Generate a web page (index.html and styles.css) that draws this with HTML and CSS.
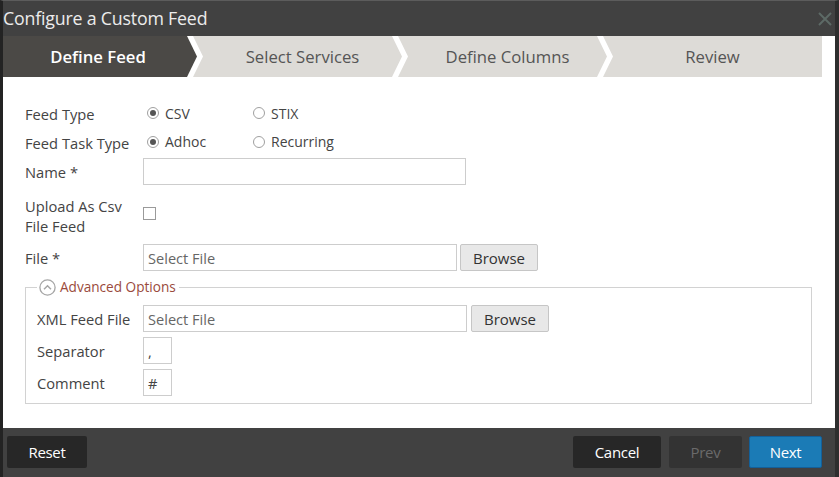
FILE: index.html
```html
<!DOCTYPE html>
<html>
<head>
<meta charset="utf-8">
<link rel="stylesheet" href="styles.css">
</head>
<body>
<div class="dialog">
  <div class="titlebar">
    <span class="title">Configure a Custom Feed</span>
    <svg class="close" width="14" height="14" viewBox="0 0 14 14"><path d="M1 1L13 13M13 1L1 13" stroke="#5d6a66" stroke-width="2"/></svg>
  </div>
  <div class="panel">
    <div class="steps">
      <div class="step first active">Define Feed</div>
      <div class="step">Select Services</div>
      <div class="step">Define Columns</div>
      <div class="step last">Review</div>
    </div>
    <div class="form">
      <div class="row r1">
        <div class="lbl">Feed Type</div>
        <div class="opt"><span class="radio on"></span>CSV</div>
        <div class="opt"><span class="radio"></span>STIX</div>
      </div>
      <div class="row r2">
        <div class="lbl">Feed Task Type</div>
        <div class="opt"><span class="radio on"></span>Adhoc</div>
        <div class="opt"><span class="radio"></span>Recurring</div>
      </div>
      <div class="row r3">
        <div class="lbl">Name *</div>
        <div class="input name"></div>
      </div>
      <div class="row r4">
        <div class="lbl two">Upload As Csv<br>File Feed</div>
        <span class="check"></span>
      </div>
      <div class="row r5">
        <div class="lbl">File *</div>
        <div class="input file ph">Select File</div>
        <div class="btn-browse">Browse</div>
      </div>
      <fieldset class="adv">
        <legend><svg class="chev" width="17" height="17" viewBox="0 0 17 17"><circle cx="8.5" cy="8.5" r="7.6" fill="none" stroke="#a6a6a6" stroke-width="1.3"/><path d="M5 10.2L8.5 6.7L12 10.2" fill="none" stroke="#a6a6a6" stroke-width="1.5"/></svg>Advanced Options</legend>
        <div class="row a1">
          <div class="lbl2">XML Feed File</div>
          <div class="input xml ph">Select File</div>
          <div class="btn-browse b2">Browse</div>
        </div>
        <div class="row a2">
          <div class="lbl2">Separator</div>
          <div class="input small">,</div>
        </div>
        <div class="row a2">
          <div class="lbl2">Comment</div>
          <div class="input small">#</div>
        </div>
      </fieldset>
    </div>
  </div>
  <div class="footer">
    <div class="fbtn reset">Reset</div>
    <div class="spacer"></div>
    <div class="fbtn cancel">Cancel</div>
    <div class="fbtn prev">Prev</div>
    <div class="fbtn next">Next</div>
  </div>
</div>
</body>
</html>
```
FILE: styles.css
```css
* { box-sizing: border-box; }
html, body { margin: 0; padding: 0; background: #414141; }
body { font-family: "Open Sans", "DejaVu Sans", sans-serif; }
.dialog {
  width: 839px; height: 477px;
  background: #414141;
  border-left: 3px solid #232323;
  border-right: 4px solid #2e2e2e;
  border-top: 1px solid #5c5c5c;
  display: flex; flex-direction: column;
}
.titlebar {
  height: 35px; display: flex; align-items: center; justify-content: space-between;
  padding: 0 3px 2px 0;
}
.title { color: #ececec; font-size: 17.8px; letter-spacing: -0.2px; }
.close { margin-top: 2px; }
.panel { background: #fff; height: 392px; }
.steps { display: flex; height: 41px; margin-right: 13px; }
.step {
  height: 41px; display: flex; align-items: center; justify-content: center;
  background: #dddbd7; color: #555; font-size: 16.7px;
  width: 209px; margin-left: -4px; padding: 0 10px 0 20px;
  clip-path: polygon(0 0, calc(100% - 10px) 0, 100% 50%, calc(100% - 10px) 100%, 0 100%, 10px 50%);
}
.step.first { width: 194px; margin-left: 0; padding: 0 10px 0 6px;
  clip-path: polygon(0 0, calc(100% - 10px) 0, 100% 50%, calc(100% - 10px) 100%, 0 100%); }
.step.last { flex: 1; width: auto; padding: 0 0 0 0;
  clip-path: polygon(0 0, 100% 0, 100% 100%, 0 100%, 10px 50%); }
.step.active { background: #4b4946; color: #fff; font-weight: 600; }
.form { padding: 23px 23px 0 22px; color: #444; font-size: 14.7px; }
.row { display: flex; align-items: center; }
.lbl { width: 118px; flex: none; }
.lbl2 { width: 106px; flex: none; }
.r1 { height: 28px; }
.r2 { height: 29px; }
.r3 { height: 27px; margin-top: 1px; }
.r4 { height: 40px; margin-top: 11px; align-items: flex-start; }
.r5 { height: 27px; margin-top: 8px; }
.two { line-height: 20px; }
.opt { width: 106px; display: flex; align-items: center; margin-top: -2px; font-size: 14px; }
.radio {
  width: 12px; height: 12px; border-radius: 50%; border: 1px solid #a0a0a0;
  margin: 0 6px 0 4px; position: relative; background: #fff; flex: none;
}
.radio.on::after {
  content: ""; position: absolute; left: 2px; top: 2px; width: 6px; height: 6px;
  border-radius: 50%; background: #555;
}
.check { width: 13px; height: 13px; border: 1px solid #9a9a9a; margin-top: 11px; background: #fff; }
.input {
  height: 27px; border: 1px solid #cdcdcd; background: #fff; color: #444;
  display: flex; align-items: center; padding-left: 4px; font-size: 14.6px;
}
.input.ph { color: #666; }
.name { width: 323px; }
.file { width: 314px; }
.xml { width: 324px; }
.small { width: 29px; }
.btn-browse {
  height: 27px; width: 78px; margin-left: 3px;
  background: #e8e8e8; border: 1px solid #c6c6c6; border-radius: 2px;
  display: flex; align-items: center; justify-content: center; color: #333; font-size: 15px;
}
.btn-browse.b2 { margin-left: 4px; }
.adv {
  margin: 6px 0 0 0; padding: 0 11px 7px 11px;
  border: 1px solid #d2d2d2; min-width: 0;
}
.adv legend {
  padding: 0 3px 0 2px; height: 20px; line-height: 20px; color: #9a4a3c;
  display: flex; align-items: center; font-size: 13.6px;
}
.chev { margin-right: 4px; }
.a1 { margin-top: 8px; height: 27px; }
.a2 { margin-top: 5px; height: 27px; }
.footer {
  flex: 1; display: flex; padding: 8px 13px 0 4px; gap: 0;
}
.spacer { flex: 1; }
.fbtn {
  height: 32px; display: flex; align-items: center; justify-content: center;
  color: #fff; font-size: 15px; border-radius: 2px; letter-spacing: -0.3px;
}
.reset { width: 80px; background: #272727; }
.cancel { width: 88px; background: #272727; }
.prev { width: 73px; margin-left: 8px; background: #333333; color: #6a6a6a; }
.next { width: 73px; margin-left: 7px; background: #1b7bb6; border: 1px solid #13609a; }
```
